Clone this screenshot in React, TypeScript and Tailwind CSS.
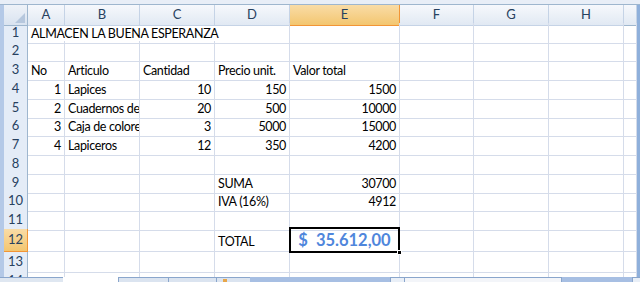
type Cell = { t?: string; r?: boolean; span?: string };
type Row = { n: string; h: string; cells: Cell[]; sel?: boolean };

const COLS = ["A", "B", "C", "D", "E", "F", "G", "H", ""];
const GRID = "grid grid-cols-[24px_37px_75px_75px_75px_110px_74px_75px_75px_13px]";

const blank = (k: number): Cell[] => Array.from({ length: k }, () => ({}));

const ROWS: Row[] = [
  { n: "1", h: "h-[18px]", cells: [{ t: "ALMACEN LA BUENA ESPERANZA", span: "col-span-4" }, ...blank(5)] },
  { n: "2", h: "h-[19px]", cells: blank(9) },
  {
    n: "3",
    h: "h-[19px]",
    cells: [{ t: "No" }, { t: "Articulo" }, { t: "Cantidad" }, { t: "Precio unit." }, { t: "Valor total" }, ...blank(4)],
  },
  {
    n: "4",
    h: "h-[19px]",
    cells: [{ t: "1", r: true }, { t: "Lapices" }, { t: "10", r: true }, { t: "150", r: true }, { t: "1500", r: true }, ...blank(4)],
  },
  {
    n: "5",
    h: "h-[18px]",
    cells: [{ t: "2", r: true }, { t: "Cuadernos de papel" }, { t: "20", r: true }, { t: "500", r: true }, { t: "10000", r: true }, ...blank(4)],
  },
  {
    n: "6",
    h: "h-[19px]",
    cells: [{ t: "3", r: true }, { t: "Caja de colores" }, { t: "3", r: true }, { t: "5000", r: true }, { t: "15000", r: true }, ...blank(4)],
  },
  {
    n: "7",
    h: "h-[19px]",
    cells: [{ t: "4", r: true }, { t: "Lapiceros" }, { t: "12", r: true }, { t: "350", r: true }, { t: "4200", r: true }, ...blank(4)],
  },
  { n: "8", h: "h-[19px]", cells: blank(9) },
  { n: "9", h: "h-[18px]", cells: [...blank(3), { t: "SUMA" }, { t: "30700", r: true }, ...blank(4)] },
  { n: "10", h: "h-[19px]", cells: [...blank(3), { t: "IVA (16%)" }, { t: "4912", r: true }, ...blank(4)] },
  { n: "11", h: "h-[19px]", cells: blank(9) },
  { n: "12", h: "h-[23px]", sel: true, cells: [...blank(3), { t: "TOTAL" }, {}, ...blank(4)] },
  { n: "13", h: "h-[19px]", cells: blank(9) },
  { n: "14", h: "h-[19px]", cells: blank(9) },
];

function ColHeader() {
  return (
    <div className={`${GRID} h-[18px] text-[13px] text-[#27415f]`}>
      <div className="relative bg-gradient-to-b from-[#eef2f8] to-[#d9e3f0] border-r border-b border-[#9eb6ce]">
        <svg className="absolute right-[2px] bottom-[2px]" width="10" height="10" viewBox="0 0 10 10">
          <polygon points="10,0 10,10 0,10" fill="#b6c7dd" />
        </svg>
      </div>
      {COLS.map((c, i) => (
        <div
          key={i}
          className={
            c === "E"
              ? "flex items-center justify-center bg-gradient-to-b from-[#f9dca6] to-[#f3c66f] border-r border-b border-[#f29536]"
              : "flex items-center justify-center bg-gradient-to-b from-[#f6f8fc] to-[#e1e9f3] border-r border-b border-[#c5d3e6] last:border-b-[#9eb6ce]"
          }
        >
          {c}
        </div>
      ))}
    </div>
  );
}

function SheetRow({ row }: { row: Row }) {
  return (
    <div className={`${GRID} ${row.h}`}>
      <div
        className={
          row.sel
            ? "flex items-center justify-center text-[13px] text-[#27415f] bg-gradient-to-b from-[#f9dca6] to-[#f3c66f] border-r border-b border-[#f29536]"
            : "flex items-center justify-center text-[13px] text-[#27415f] bg-[#e4ecf7] border-r border-r-[#9eb6ce] border-b border-b-[#f4f7fb]"
        }
      >
        {row.n}
      </div>
      {row.cells.map((c, i) => (
        <div
          key={i}
          className={`${c.span ?? ""} flex items-end ${c.r ? "justify-end" : "justify-start"} px-[3px] pb-[1px] overflow-hidden whitespace-nowrap border-r border-b border-[#d5dcea] text-[12.5px] tracking-[-0.35px] leading-[16px] text-black`}
        >
          {c.t}
        </div>
      ))}
    </div>
  );
}

function SheetTabs() {
  return (
    <div className="flex h-[5px] bg-[#a7bfe3]">
      <div className="w-[63px] bg-[#dfe7f1] border-t border-[#8aa6cc]" />
      <div className="w-[55px] bg-white" />
      <div className="w-[50px] bg-[#dbe4f0] border-t border-l border-[#8aa6cc]" />
      <div className="w-[48px] bg-[#dbe4f0] border-t border-l border-[#8aa6cc]" />
      <div className="w-[34px] bg-[#dbe4f0] border-t border-l border-[#8aa6cc] relative">
        <div className="absolute left-[6px] top-[1px] w-[4px] h-[4px] bg-[#e7a64a]" />
      </div>
      <div className="w-[140px]" />
      <div className="w-[14px] bg-[#e9eff7] border-t border-l border-[#8aa6cc]" />
      <div className="w-[158px] bg-[#f3f5f9] border-t border-x border-[#8aa6cc]" />
      <div className="flex-1" />
      <div className="w-[8px] bg-[#e9eff7] border-t border-l border-[#8aa6cc]" />
    </div>
  );
}

export default function App() {
  return (
    <div className="w-[640px] h-[282px] overflow-hidden bg-white font-['Lato',sans-serif] flex flex-col">
      <div className="h-[5px] shrink-0 bg-[#e8eef7] border-b border-[#9eb6ce]" />
      <div className="flex h-[272px] shrink-0 overflow-hidden">
        <div className="w-[4px] shrink-0 bg-[#b4c9e7]" />
        <div className="relative flex-1 overflow-hidden">
          <ColHeader />
          {ROWS.map((r) => (
            <SheetRow key={r.n} row={r} />
          ))}
          <div className="absolute left-[285px] top-[222px] w-[111px] h-[26px] border-2 border-black flex items-end justify-center gap-[8px] pb-[1px] text-[16.5px] leading-[20px] font-bold text-[#4f86dc]">
            <span>$</span>
            <span>35.612,00</span>
          </div>
          <div className="absolute left-[393px] top-[245px] w-[5px] h-[5px] bg-black border border-white" />
        </div>
        <div className="w-[3px] shrink-0 bg-[#8fb0db]" />
      </div>
      <SheetTabs />
    </div>
  );
}
